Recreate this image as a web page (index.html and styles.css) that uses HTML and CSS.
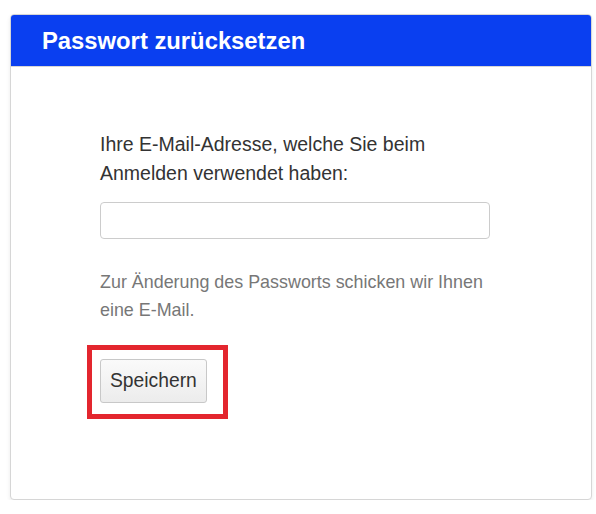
FILE: index.html
```html
<!DOCTYPE html>
<html lang="de">
<head>
    <meta charset="UTF-8">
    <meta name="viewport" content="width=device-width, initial-scale=1.0">
    <title>Passwort zurücksetzen</title>
    <link rel="stylesheet" href="styles.css">
</head>
<body>
    <div class="panel">
        <div class="panel-heading">
            <h1>Passwort zurücksetzen</h1>
        </div>
        <form class="panel-body">
            <label for="email">Ihre E-Mail-Adresse, welche Sie beim Anmelden verwendet haben:</label>
            <input type="email" id="email" />

            <p class="help">Zur Änderung des Passworts schicken wir Ihnen eine E-Mail.</p>

            <span class="highlight">
                <button type="button">Speichern</button>
            </span>
        </form>
    </div>
</body>
</html>
```

FILE: styles.css
```css
body {
    font-family: "Liberation Sans", Arial, sans-serif;
    background-color: #ffffff;
    margin: 0;
    padding: 14px 0 0 10px;
}

.panel {
    width: 580px;
    border: 1px solid #d6d6d6;
    border-radius: 4px;
    box-shadow: 0 2px 4px rgba(0, 0, 0, 0.08);
    background-color: #ffffff;
    overflow: hidden;
}

.panel-heading {
    background-color: #0a3ff0;
    height: 51px;
    display: flex;
    align-items: center;
    padding-left: 31px;
    border-bottom: 1px solid #d6d6d6;
}

h1 {
    margin: 0;
    color: #ffffff;
    font-size: 23.8px;
    font-weight: bold;
}

.panel-body {
    display: flex;
    flex-direction: column;
    align-items: flex-start;
    padding: 63px 101px 80px 89px;
}

label {
    font-size: 19.5px;
    line-height: 29px;
    color: #333333;
}

input {
    width: 100%;
    box-sizing: border-box;
    height: 37px;
    margin-top: 14px;
    border: 1px solid #cccccc;
    border-radius: 4px;
    padding: 6px 12px;
    font-size: 16px;
}

.help {
    margin: 30px 0 0;
    font-size: 17.9px;
    line-height: 27.5px;
    color: #777777;
}

.highlight {
    display: inline-block;
    margin-top: 21px;
    margin-left: -13px;
    padding: 9px 16px 11px 8px;
    border: 5px solid #e3262e;
}

button {
    display: block;
    height: 44px;
    padding: 0 9px;
    font-family: inherit;
    font-size: 19.3px;
    color: #333333;
    background: linear-gradient(#fafafa, #ececec);
    border: 1px solid #c8c8c8;
    border-radius: 3px;
}
```
